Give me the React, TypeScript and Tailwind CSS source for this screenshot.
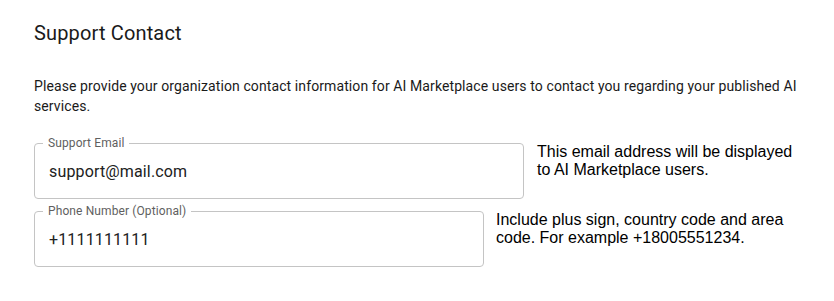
import React from "react";

type FieldRowProps = {
  label: string;
  value: string;
  help: string;
  fieldWidth: string;
  helpWidth: string;
  gap: string;
};

// outlined text field with the label sitting on the top border
function FieldRow({ label, value, help, fieldWidth, helpWidth, gap }: FieldRowProps) {
  return (
    <div className={`flex items-start ${gap}`}>
      <div
        className={`relative flex h-[56px] ${fieldWidth} shrink-0 items-center rounded-[4px] border border-[#c4c4c4] px-[14px]`}
      >
        <span className="absolute left-[8px] -top-[7px] bg-white px-[5px] text-[12px] leading-[12px] tracking-[0.11px] text-[#5f5f5f]">
          {label}
        </span>
        <span className="text-[16px] leading-[23px] tracking-[0.15px] text-[#212121]">{value}</span>
      </div>
      <p
        className={`${helpWidth} font-['Liberation_Sans',Arial,sans-serif] text-[16px] leading-[18px] text-black`}
      >
        {help}
      </p>
    </div>
  );
}

export default function App() {
  return (
    <div className="min-h-[301px] w-full bg-white px-[34px] pt-[17px] font-['Roboto',sans-serif] text-[#1a1a1a]">
      <h2 className="text-[20px] leading-[32px] font-normal tracking-[0.15px]">Support Contact</h2>
      <p className="mt-[27px] text-[14px] leading-[20px] tracking-[0.1px]">
        Please provide your organization contact information for AI Marketplace users to contact
        you regarding your published AI services.
      </p>
      <div className="mt-[27px] flex flex-col gap-[12px]">
        <FieldRow
          label="Support Email"
          value="support@mail.com"
          help="This email address will be displayed to AI Marketplace users."
          fieldWidth="w-[490px]"
          helpWidth="w-[265px]"
          gap="gap-[13px]"
        />
        <FieldRow
          label="Phone Number (Optional)"
          value="+1111111111"
          help="Include plus sign, country code and area code. For example +18005551234."
          fieldWidth="w-[450px]"
          helpWidth="w-[300px]"
          gap="gap-[12px]"
        />
      </div>
    </div>
  );
}
